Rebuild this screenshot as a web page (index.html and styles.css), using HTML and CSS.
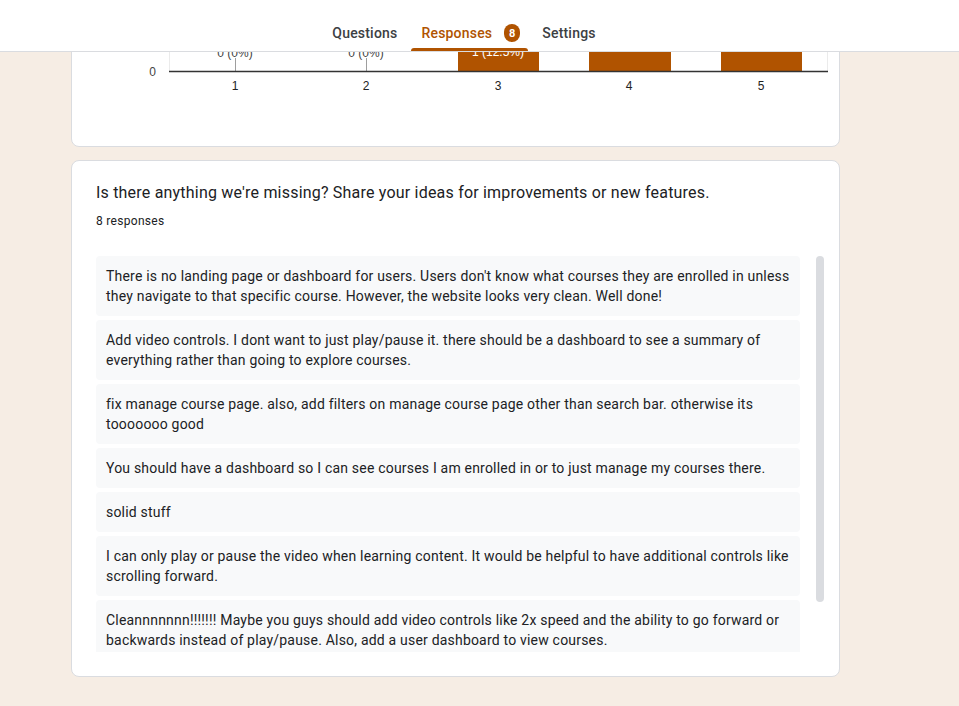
FILE: index.html
```html
<!DOCTYPE html>
<html lang="en">
<head>
<meta charset="utf-8">
<title>Responses</title>
<link rel="stylesheet" href="styles.css">
</head>
<body>
<header class="topbar">
  <nav class="tabs">
    <a class="tab">Questions</a>
    <a class="tab tab-active">Responses <span class="badge">8</span></a>
    <a class="tab">Settings</a>
  </nav>
</header>

<main class="page">
  <div class="column">
    <section class="card card-chart">
      <svg class="chart" width="767" height="145" viewBox="72 1 767 145" xmlns="http://www.w3.org/2000/svg">
        <rect x="169" y="0" width="659" height="71" fill="#ffffff"/>
        <line x1="169.5" y1="0" x2="169.5" y2="71" stroke="#ebebeb" stroke-width="1"/>
        <line x1="827.5" y1="0" x2="827.5" y2="71" stroke="#ebebeb" stroke-width="1"/>
        <rect x="458" y="0" width="81" height="71" fill="#b05300"/>
        <rect x="589" y="0" width="82" height="71" fill="#b05300"/>
        <rect x="721" y="0" width="81" height="71" fill="#b05300"/>
        <line x1="235.5" y1="58" x2="235.5" y2="71" stroke="#9e9e9e" stroke-width="1"/>
        <line x1="366.5" y1="58" x2="366.5" y2="71" stroke="#9e9e9e" stroke-width="1"/>
        <g class="chart-val">
          <text x="235" y="57" text-anchor="middle">0 (0%)</text>
          <text x="366" y="57" text-anchor="middle">0 (0%)</text>
        </g>
        <text class="chart-val-in" x="498" y="56" text-anchor="middle">1 (12.5%)</text>
        <line x1="169" y1="71.5" x2="828" y2="71.5" stroke="#333333" stroke-width="1.5"/>
        <text class="chart-axis" x="156" y="76" text-anchor="end">0</text>
        <g class="chart-cat">
          <text x="235" y="90" text-anchor="middle">1</text>
          <text x="366" y="90" text-anchor="middle">2</text>
          <text x="498" y="90" text-anchor="middle">3</text>
          <text x="629" y="90" text-anchor="middle">4</text>
          <text x="761" y="90" text-anchor="middle">5</text>
        </g>
      </svg>
    </section>

    <section class="card card-text">
      <h2 class="q-title">Is there anything we're missing? Share your ideas for improvements or new features.</h2>
      <div class="q-count">8 responses</div>
      <div class="answers-wrap">
        <div class="answers">
          <div class="answer">There is no landing page or dashboard for users. Users don't know what courses they are enrolled in unless they navigate to that specific course. However, the website looks very clean. Well done!</div>
          <div class="answer">Add video controls. I dont want to just play/pause it. there should be a dashboard to see a summary of everything rather than going to explore courses.</div>
          <div class="answer">fix manage course page. also, add filters on manage course page other than search bar. otherwise its tooooooo good</div>
          <div class="answer">You should have a dashboard so I can see courses I am enrolled in or to just manage my courses there.</div>
          <div class="answer">solid stuff</div>
          <div class="answer">I can only play or pause the video when learning content. It would be helpful to have additional controls like scrolling forward.</div>
          <div class="answer">Cleannnnnnn!!!!!!! Maybe you guys should add video controls like 2x speed and the ability to go forward or backwards instead of play/pause. Also, add a user dashboard to view courses.</div>
        </div>
        <div class="scroll-track"><div class="scroll-thumb"></div></div>
      </div>
    </section>
  </div>
</main>
</body>
</html>
```

FILE: styles.css
```css
* {
  box-sizing: border-box;
}

html, body {
  margin: 0;
  padding: 0;
}

body {
  background: #f6ede4;
  font-family: Roboto, "Noto Sans", Arial, sans-serif;
  color: #202124;
  height: 706px;
  overflow: hidden;
}

.topbar {
  position: fixed;
  top: 0;
  left: 0;
  right: 0;
  height: 52px;
  background: #ffffff;
  border-bottom: 1px solid #dadce0;
  z-index: 10;
}

.tabs {
  display: flex;
  justify-content: center;
  gap: 4px;
  padding-right: 31px;
  height: 51px;
}

.tab {
  position: relative;
  display: flex;
  align-items: flex-start;
  height: 51px;
  padding: 23px 10px 0;
  font-size: 14px;
  line-height: 20px;
  font-weight: 500;
  color: #3c4043;
  letter-spacing: 0.2px;
}

.tab-active {
  color: #b05300;
  padding-right: 8px;
}

.tab-active::after {
  content: "";
  position: absolute;
  left: 0;
  right: 0;
  bottom: 0;
  height: 3px;
  background: #b05300;
  border-radius: 3px 3px 0 0;
}

.badge {
  display: inline-flex;
  align-items: center;
  justify-content: center;
  width: 16px;
  height: 18px;
  margin-left: 12px;
  margin-top: 1px;
  border-radius: 8px;
  background: #b05300;
  color: #ffffff;
  font-size: 11px;
  font-weight: 700;
  line-height: 1;
}

.page {
  padding-left: 71px;
}

.column {
  width: 769px;
  display: flex;
  flex-direction: column;
  gap: 13px;
}

.card {
  background: #ffffff;
  border: 1px solid #dadce0;
  border-radius: 8px;
}

.card-chart {
  height: 147px;
  overflow: hidden;
}

.chart {
  display: block;
}

.chart-val text,
.chart-val-in,
.chart-axis,
.chart-cat text {
  font-family: "Liberation Sans", Arial, sans-serif;
  font-size: 12px;
}

.chart-val text {
  fill: #444444;
}

.chart-val-in {
  fill: #ffffff;
}

.chart-cat text {
  fill: #222222;
}

.chart-axis {
  fill: #444444;
}

.card-text {
  padding: 20px 12px 24px 24px;
}

.q-title {
  margin: 0;
  font-size: 16px;
  line-height: 24px;
  font-weight: 400;
  color: #202124;
  letter-spacing: 0.2px;
}

.q-count {
  margin-top: 8px;
  font-size: 12px;
  line-height: 16px;
  color: #202124;
  letter-spacing: 0.3px;
}

.answers-wrap {
  margin-top: 27px;
  display: flex;
  align-items: flex-start;
  height: 396px;
}

.answers {
  flex: 0 0 704px;
  width: 704px;
  height: 396px;
  overflow: hidden;
}

.answer {
  margin-bottom: 4px;
  padding: 10px;
  background: #f8f9fa;
  border-radius: 4px;
  font-size: 14px;
  line-height: 20px;
  color: #202124;
  letter-spacing: 0.2px;
}

.scroll-track {
  flex: 0 0 8px;
  margin-left: 16px;
  width: 8px;
  height: 396px;
}

.scroll-thumb {
  width: 8px;
  height: 346px;
  border-radius: 4px;
  background: #dadce0;
}
```
